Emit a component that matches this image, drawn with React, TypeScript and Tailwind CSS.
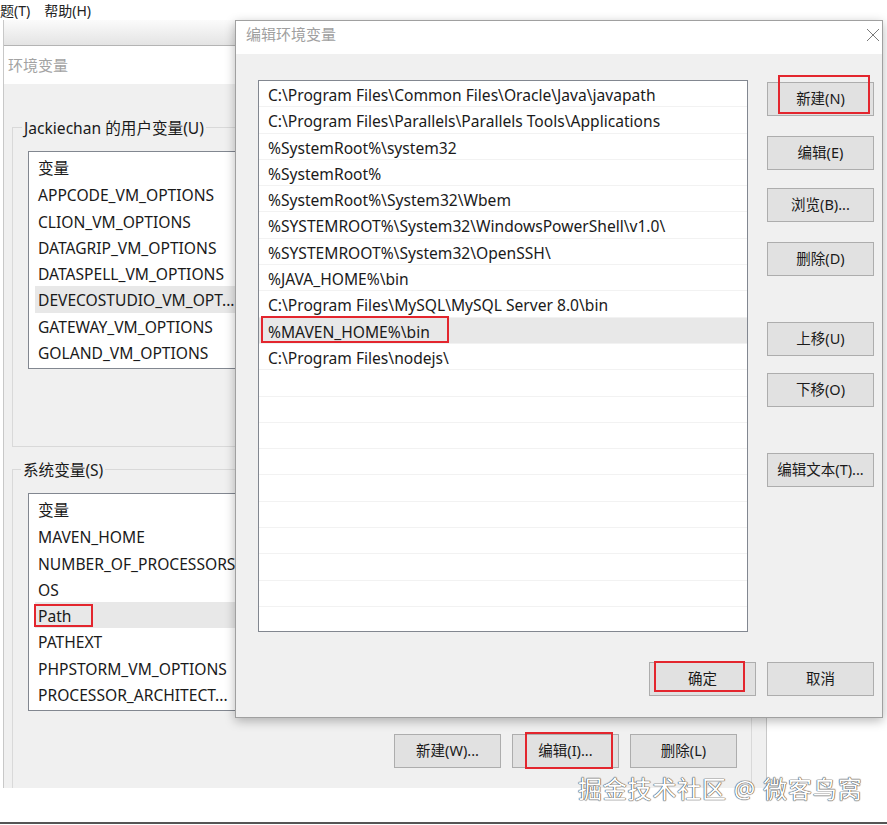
import React from 'react';

// 背景窗口: 环境变量
const userVars = [
  'APPCODE_VM_OPTIONS',
  'CLION_VM_OPTIONS',
  'DATAGRIP_VM_OPTIONS',
  'DATASPELL_VM_OPTIONS',
  'DEVECOSTUDIO_VM_OPT...',
  'GATEWAY_VM_OPTIONS',
  'GOLAND_VM_OPTIONS',
];

const sysVars = [
  'MAVEN_HOME',
  'NUMBER_OF_PROCESSORS',
  'OS',
  'Path',
  'PATHEXT',
  'PHPSTORM_VM_OPTIONS',
  'PROCESSOR_ARCHITECT...',
];

// 编辑环境变量: Path 的值
const pathItems = [
  'C:\\Program Files\\Common Files\\Oracle\\Java\\javapath',
  'C:\\Program Files\\Parallels\\Parallels Tools\\Applications',
  '%SystemRoot%\\system32',
  '%SystemRoot%',
  '%SystemRoot%\\System32\\Wbem',
  '%SYSTEMROOT%\\System32\\WindowsPowerShell\\v1.0\\',
  '%SYSTEMROOT%\\System32\\OpenSSH\\',
  '%JAVA_HOME%\\bin',
  'C:\\Program Files\\MySQL\\MySQL Server 8.0\\bin',
  '%MAVEN_HOME%\\bin',
  'C:\\Program Files\\nodejs\\',
];

interface WinButtonProps {
  label: string;
  className?: string;
  mark?: string; // 红框标注的位置
}

const WinButton: React.FC<WinButtonProps> = ({ label, className = '', mark }) => (
  <div
    className={`relative w-[107px] h-[34px] shrink-0 bg-[#e1e1e1] border border-[#adadad] flex items-center justify-center text-[14.5px] text-[#1a1a1a] ${className}`}
  >
    {label}
    {mark && <div className={`absolute border-2 border-[#e3262e] ${mark}`} />}
  </div>
);

const VarList: React.FC<{ items: string[]; selected: number; markSelected?: boolean }> = ({
  items,
  selected,
  markSelected,
}) => (
  <div className="ml-[15px] mt-[14px] w-[700px] h-[218px] bg-white border border-[#828790] pt-[3px]">
    <div className="h-[26.3px] flex items-center pl-[9px] pt-[2px]">变量</div>
    {items.map((name, i) => (
      <div key={name} className="h-[26.3px] pl-[6px]">
        <div
          className={`relative h-full w-[202px] flex items-center pl-[3px] pt-[3px] ${i === selected ? 'bg-[#e8e8e8]' : ''}`}
        >
          {name}
          {i === selected && markSelected && (
            <div className="absolute left-[-1px] top-[2px] w-[59px] h-[23px] border-2 border-[#e3262e]" />
          )}
        </div>
      </div>
    ))}
  </div>
);

const EnvWindow: React.FC = () => (
  <div className="absolute left-[3px] top-[20px] w-[764px] h-[768px] flex flex-col border-l border-r border-[#c8c8c8]">
    <div className="h-[26px] bg-gradient-to-b from-[#fbfbfb] to-[#e4e4e4] border-b border-[#b4b4b4]" />
    <div className="h-[38px] bg-white flex items-center pl-[4px] text-[15px] text-[#a3a3a3]">环境变量</div>
    <div className="flex-1 bg-[#f0f0f0] overflow-hidden">
      <fieldset className="mt-[33px] ml-[8px] w-[740px] h-[330px] border border-[#d9d9d9]">
        <legend className="ml-[9px] px-[2px] h-[20px] leading-[22px]">Jackiechan 的用户变量(U)</legend>
        <VarList items={userVars} selected={4} />
      </fieldset>
      <fieldset className="mt-[12px] ml-[8px] w-[740px] h-[360px] border border-[#d9d9d9]">
        <legend className="ml-[8px] px-[2px] h-[20px] leading-[22px]">系统变量(S)</legend>
        <VarList items={sysVars} selected={3} markSelected />
        <div className="mt-[23px] flex justify-end gap-[11px] pr-[14px]">
          <WinButton label="新建(W)..." />
          <WinButton label="编辑(I)..." mark="left-[12px] top-[-3px] right-[5px] bottom-[-2px]" />
          <WinButton label="删除(L)" />
        </div>
      </fieldset>
    </div>
  </div>
);

const EditDialog: React.FC = () => (
  <div className="absolute left-[235px] top-[20px] w-[648px] h-[698px] flex flex-col border border-[#a0a0a0] shadow-[0_3px_10px_rgba(0,0,0,0.28)]">
    <div className="h-[33px] bg-white flex items-center justify-between pl-[10px] pr-[2px] pb-[6px]">
      <span className="text-[15px] text-[#a0a0a0]">编辑环境变量</span>
      <svg width="14" height="14" viewBox="0 0 14 14">
        <path d="M1 1 L13 13 M13 1 L1 13" stroke="#7a7a7a" strokeWidth="1" fill="none" />
      </svg>
    </div>
    <div className="flex-1 bg-[#f0f0f0] pt-[26px]">
      <div className="flex">
        <div className="ml-[22px] w-[490px] h-[552px] bg-white border border-[#828790] overflow-hidden">
          {Array.from({ length: 21 }).map((_, i) => {
            const text = pathItems[i] ?? '';
            const selected = i === 9;
            return (
              <div
                key={i}
                className={`relative h-[26.3px] flex items-center pl-[9px] pt-[4px] border-b border-[#f2f2f2] whitespace-nowrap ${selected ? 'bg-[#e8e8e8]' : ''}`}
              >
                {text}
                {selected && (
                  <div className="absolute left-[2px] top-[-2px] w-[188px] h-[27px] border-2 border-[#e3262e]" />
                )}
              </div>
            );
          })}
        </div>
        <div className="ml-[19px] flex flex-col">
          <WinButton label="新建(N)" className="mt-[2px]" mark="left-[10px] top-[-8px] right-[3px] bottom-[1px]" />
          <WinButton label="编辑(E)" className="mt-[20px]" />
          <WinButton label="浏览(B)..." className="mt-[18px]" />
          <WinButton label="删除(D)" className="mt-[20px]" />
          <WinButton label="上移(U)" className="mt-[46px]" />
          <WinButton label="下移(O)" className="mt-[17px]" />
          <WinButton label="编辑文本(T)..." className="mt-[46px]" />
        </div>
      </div>
      <div className="mt-[30px] flex justify-end gap-[11px] pr-[8px]">
        <WinButton label="确定" mark="left-[4px] top-[-2px] right-[10px] bottom-[3px]" />
        <WinButton label="取消" />
      </div>
    </div>
  </div>
);

export default function App() {
  return (
    <div className="relative w-[887px] h-[825px] bg-white overflow-hidden flex flex-col text-[15.6px] text-[#1a1a1a] font-['Noto_Sans','Noto_Sans_CJK_SC',sans-serif]">
      {/* 菜单栏 (被裁剪) */}
      <div className="h-[20px] flex items-center gap-[14px] text-[14px] text-[#222]">
        <span>题(T)</span>
        <span>帮助(H)</span>
      </div>
      <div className="flex-1" />
      <div className="h-[2px] bg-[#555] mb-[1px]" />

      <EnvWindow />
      <EditDialog />

      {/* 水印 */}
      <div className="absolute left-[578px] top-[771px] text-[24px] tracking-[0.8px] text-white [text-shadow:0_0_1px_#444,0_0_1px_#444,0_0_1px_#444]">
        掘金技术社区 @ 微客鸟窝
      </div>
    </div>
  );
}
